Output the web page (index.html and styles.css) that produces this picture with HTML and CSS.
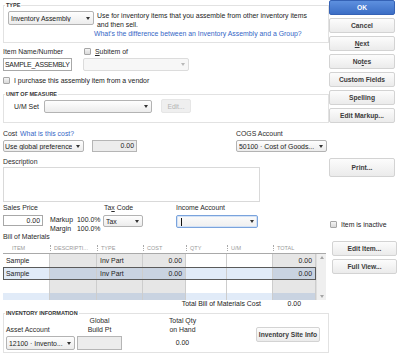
FILE: index.html
```html
<!DOCTYPE html>
<html lang="en">
<head>
    <meta charset="UTF-8">
    <meta name="viewport" content="width=device-width, initial-scale=1.0">
    <title>New Item - Inventory Assembly</title>
    <link rel="stylesheet" href="styles.css">
</head>
<body>
<div class="window">
    <div class="main">
        <fieldset class="group type-group">
            <legend>TYPE</legend>
            <div class="type-row">
                <div class="select type-select"><span>Inventory Assembly</span><i class="caret"></i></div>
                <div class="type-info">
                    <div>Use for inventory items that you assemble from other inventory items</div>
                    <div>and then sell.</div>
                    <a class="link diff-link" href="#">What's the difference between an Inventory Assembly and a Group?</a>
                </div>
            </div>
        </fieldset>

        <div class="name-row">
            <div class="name-field">
                <div class="label">Item Name/Number</div>
                <div class="input name-input">SAMPLE_ASSEMBLY</div>
            </div>
            <div class="subitem-field">
                <div class="label check"><span class="checkbox"></span><span><u>S</u>ubitem of</span></div>
                <div class="select disabled subitem-select"><span></span><i class="caret"></i></div>
            </div>
        </div>
        <div class="check vendor-check"><span class="checkbox"></span><span>I purchase this assembly item from a vendor</span></div>

        <fieldset class="group um-group">
            <legend>UNIT OF MEASURE</legend>
            <div class="um-row">
                <span class="um-label">U/M Set</span>
                <div class="select um-select"><span></span><i class="caret"></i></div>
                <button class="btn btn-off">Edit...</button>
            </div>
        </fieldset>

        <div class="cost-row">
            <div class="cost-field">
                <div class="label">Cost <a class="link" href="#">What is this cost?</a></div>
                <div class="cost-controls">
                    <div class="select cost-select"><span>Use global preference</span><i class="caret"></i></div>
                    <div class="input num gray cost-input">0.00</div>
                </div>
            </div>
            <div class="cogs-field">
                <div class="label">COGS Account</div>
                <div class="select cogs-select"><span>50100 · Cost of Goods...</span><i class="caret"></i></div>
            </div>
        </div>

        <div class="label desc-label">Description</div>
        <div class="textarea"></div>

        <div class="sales-row">
            <div class="sales-field">
                <div class="label">Sales Price</div>
                <div class="input num sales-input">0.00</div>
            </div>
            <div class="markup">
                <span>Markup</span><span>100.0%</span>
                <span>Margin</span><span>100.0%</span>
            </div>
            <div class="tax-field">
                <div class="label">Ta<u>x</u> Code</div>
                <div class="select tax-select"><span>Tax</span><i class="caret"></i></div>
            </div>
            <div class="income-field">
                <div class="label">Income Account</div>
                <div class="select focus income-select"><span class="cursor"></span><i class="caret"></i></div>
            </div>
        </div>

        <div class="label bom-label">Bill of Materials</div>
        <div class="bom">
            <div class="bom-head">
                <span>ITEM</span><span>DESCRIPTI...</span><span>TYPE</span><span>COST</span><span>QTY</span><span>U/M</span><span>TOTAL</span>
            </div>
            <div class="bom-body">
                <div class="bom-rows">
                    <div class="bom-row">
                        <div class="w">Sample</div><div class="g"></div><div class="g">Inv Part</div><div class="g num">0.00</div><div class="w"></div><div class="w"></div><div class="g num">0.00</div>
                    </div>
                    <div class="bom-row selected">
                        <div class="w">Sample</div><div class="g"></div><div class="g">Inv Part</div><div class="g num">0.00</div><div class="w"></div><div class="w"></div><div class="g num">0.00</div>
                    </div>
                    <div class="bom-row">
                        <div class="w"></div><div class="g"></div><div class="g"></div><div class="g"></div><div class="w"></div><div class="w"></div><div class="g"></div>
                    </div>
                    <div class="bom-row alt">
                        <div class="w"></div><div class="g"></div><div class="g"></div><div class="g"></div><div class="w"></div><div class="w"></div><div class="g"></div>
                    </div>
                </div>
                <div class="scrollbar"><i class="arrow up"></i><i class="arrow down"></i></div>
            </div>
        </div>
        <div class="bom-total"><span class="total-label">Total Bill of Materials Cost</span><span class="total-value">0.00</span></div>

        <fieldset class="group inv-group">
            <legend>INVENTORY INFORMATION</legend>
            <div class="inv-row">
                <div class="asset-field">
                    <div class="label">Asset Account</div>
                    <div class="select asset-select"><span>12100 · Invento...</span><i class="caret"></i></div>
                </div>
                <div class="build-field">
                    <div class="label">Global<br>Build Pt</div>
                    <div class="input gray build-input"></div>
                </div>
                <div class="qty-field">
                    <div class="label">Total Qty<br>on Hand</div>
                    <div class="qty-value">0.00</div>
                </div>
                <button class="btn site-btn">Inventory Site Info</button>
            </div>
        </fieldset>
    </div>

    <div class="side">
        <button class="btn primary">OK</button>
        <button class="btn">Cancel</button>
        <button class="btn"><u>N</u>ext</button>
        <button class="btn">No<u>t</u>es</button>
        <button class="btn">Custom Fields</button>
        <button class="btn">Spelling</button>
        <button class="btn">Edit Markup...</button>
        <button class="btn print-btn">Print...</button>
        <div class="check inactive-check"><span class="checkbox"></span><span>Item is inactive</span></div>
        <button class="btn edit-item-btn">Edit Item...</button>
        <button class="btn full-view-btn">Full View...</button>
    </div>
</div>
</body>
</html>
```

FILE: styles.css
```css
body {
    margin: 0;
    font-family: 'Liberation Sans', Arial, sans-serif;
    font-size: 6.9px;
    color: #222;
    background: #fff;
}

.window {
    display: flex;
    width: 400px;
    height: 358px;
    overflow: hidden;
}

.main {
    width: 326px;
    padding-left: 3px;
    flex: none;
}

.side {
    width: 66px;
    display: flex;
    flex-direction: column;
    flex: none;
}

/* group boxes */
.group {
    box-sizing: border-box;
    width: 100%;
    min-width: 0;
    margin: 0;
    border: 1px solid #e2e2e2;
    padding: 3px 4px 4px;
}

.group legend {
    font-size: 5.5px;
    font-weight: bold;
    line-height: 6px;
    padding: 0 1px;
    margin-left: -3px;
    color: #333;
}

.type-group {
    margin-top: 2px;
}

.type-row {
    display: flex;
    align-items: flex-start;
}

.type-select {
    width: 86px;
    height: 14px;
    padding-right: 5px;
}

.type-info {
    margin-left: 3px;
    line-height: 9px;
    white-space: nowrap;
}

.diff-link {
    display: block;
    margin-left: -3px;
}

.link {
    color: #3466c6;
    text-decoration: none;
}

.label {
    line-height: 9px;
    color: #2a2a2a;
    white-space: nowrap;
}

/* controls */
.select {
    box-sizing: border-box;
    flex: none;
    display: flex;
    align-items: center;
    justify-content: space-between;
    border: 1px solid #b3b3b3;
    border-radius: 2px;
    background: linear-gradient(#fefefe, #ececec);
    padding: 0 3px 0 2px;
    white-space: nowrap;
    overflow: hidden;
    color: #222;
}

.select span {
    min-width: 0;
    overflow: hidden;
}

.caret {
    flex: none;
    width: 0;
    height: 0;
    margin-left: 2px;
    border-left: 2.5px solid transparent;
    border-right: 2.5px solid transparent;
    border-top: 3px solid #333;
}

.select.disabled {
    border-color: #dcdcdc;
    background: #f7f7f7;
}

.select.disabled .caret {
    border-top-color: #b8b8b8;
}

.select.focus {
    border-color: #7aa3dc;
    box-shadow: inset 0 0 0 1px #d3e2f6;
    background: linear-gradient(#fbfbfb, #efefef);
}

.cursor {
    flex: none;
    width: 1px;
    height: 8px;
    margin-left: 2px;
    background: #111;
}

.input {
    box-sizing: border-box;
    flex: none;
    border: 1px solid #a8a8a8;
    background: #fff;
    padding: 0 2px;
    white-space: nowrap;
    overflow: hidden;
}

.input.num {
    text-align: right;
}

.input.gray {
    background: #ececec;
    border-color: #b5b5b5;
}

.checkbox {
    box-sizing: border-box;
    display: inline-block;
    flex: none;
    width: 7px;
    height: 7px;
    border: 1px solid #a6a6a6;
    border-radius: 1px;
    background: linear-gradient(#f4f4f4, #d9d9d9);
}

.check {
    display: flex;
    align-items: center;
    gap: 4px;
    white-space: nowrap;
}

.btn {
    box-sizing: border-box;
    flex: none;
    display: flex;
    align-items: center;
    justify-content: center;
    height: 15px;
    padding: 0;
    border: 1px solid #d3d3d3;
    border-radius: 2px;
    background: linear-gradient(#fcfcfc, #ebebeb);
    font-family: 'Liberation Sans', Arial, sans-serif;
    font-size: 6.7px;
    font-weight: bold;
    color: #3b3b3b;
    white-space: nowrap;
}

.btn.primary {
    background: linear-gradient(#5d90df, #3c6ec5);
    border-color: #3562b5;
    color: #fff;
}

.btn-off {
    width: 30px;
    height: 14px;
    margin-left: 9px;
    font-weight: normal;
    color: #b3b3b3;
    background: #efefef;
    border-color: #e6e6e6;
}

/* item name */
.name-row {
    display: flex;
    gap: 11px;
    margin-top: 4px;
}

.name-field {
    width: 69px;
}

.name-input {
    height: 13px;
    line-height: 11px;
    margin-top: 2px;
    letter-spacing: -0.25px;
    padding: 0 1px;
}

.subitem-field .check {
    padding-left: 1px;
}

.subitem-select {
    width: 106px;
    height: 13px;
    margin-top: 2px;
}

.vendor-check {
    margin-top: 5px;
    height: 8px;
}

/* unit of measure */
.um-group {
    margin-top: 7px;
    padding: 2px 4px 9px;
}

.um-row {
    display: flex;
    align-items: center;
    height: 14px;
}

.um-label {
    width: 30px;
    margin-left: 6px;
}

.um-select {
    width: 108px;
    height: 13px;
}

/* cost */
.cost-row {
    display: flex;
    margin-top: 7px;
}

.cost-row .label {
    line-height: 8px;
}

.cost-field {
    width: 233px;
}

.cost-field .link {
    margin-left: 1px;
}

.cost-controls {
    display: flex;
    gap: 8px;
    margin-top: 2px;
}

.cost-select {
    width: 81px;
    height: 12px;
    padding-left: 1px;
}

.cost-input {
    width: 45px;
    height: 12px;
    line-height: 10px;
}

.cogs-field {
    width: 91px;
}

.cogs-select {
    height: 12px;
    margin-top: 2px;
}

/* description */
.desc-label {
    margin-top: 6px;
    line-height: 8px;
}

.textarea {
    box-sizing: border-box;
    width: 257px;
    height: 35px;
    margin-top: 1px;
    border: 1px solid #d9d9d9;
}

/* sales */
.sales-row {
    display: flex;
    align-items: flex-start;
    margin-top: 2px;
}

.sales-row .label {
    line-height: 8px;
}

.sales-field {
    width: 40px;
}

.sales-input {
    height: 11px;
    line-height: 9px;
    margin-top: 3px;
}

.markup {
    display: grid;
    grid-template-columns: 27px auto;
    width: 53px;
    margin-left: 7px;
    margin-top: 11px;
    line-height: 9px;
    white-space: nowrap;
}

.tax-field {
    width: 40px;
}

.tax-field .label {
    padding-left: 1px;
}

.tax-select {
    height: 12px;
    margin-top: 3px;
}

.income-field {
    width: 82px;
    margin-left: 33px;
}

.income-select {
    height: 13px;
    margin-top: 3px;
}

/* bill of materials */
.bom-label {
    line-height: 7px;
}

.bom {
    width: 323px;
    margin-top: 2px;
}

.bom-head,
.bom-row {
    display: grid;
    grid-template-columns: 47px 47px 46px 43px 41px 46px 43px;
}

.bom-head {
    height: 11px;
    align-items: center;
}

.bom-head span {
    font-size: 5.5px;
    line-height: 6px;
    color: #9a9a9a;
    padding-left: 3px;
    border-left: 1px dotted #a9a9a9;
    white-space: nowrap;
    overflow: hidden;
}

.bom-head span:first-child {
    border-left: 0;
    padding-left: 9px;
}

.bom-body {
    display: flex;
    height: 46px;
    border-top: 1px solid #a9a9a9;
}

.bom-rows {
    width: 313px;
    overflow: hidden;
}

.bom-row {
    height: 13px;
}

.bom-row div {
    box-sizing: border-box;
    border-right: 1px solid #cdcdcd;
    padding: 0 3px;
    line-height: 13px;
    white-space: nowrap;
}

.bom-row .num {
    text-align: right;
}

.bom-row .w {
    background: #fff;
}

.bom-row .g {
    background: #e6e6e6;
}

.bom-row.selected {
    outline: 1px solid #5a5a5a;
    outline-offset: -1px;
}

.bom-row.selected .w,
.bom-row.alt .w {
    background: #e1ebf8;
}

.bom-row.selected .g,
.bom-row.alt .g {
    background: #c9d3e1;
}

.scrollbar {
    box-sizing: border-box;
    width: 10px;
    display: flex;
    flex-direction: column;
    justify-content: space-between;
    align-items: center;
    padding: 2px 0;
    background: #efefef;
    border-left: 1px solid #dedede;
}

.arrow {
    width: 0;
    height: 0;
    border-left: 2.5px solid transparent;
    border-right: 2.5px solid transparent;
}

.arrow.up {
    border-bottom: 3px solid #a5a5a5;
}

.arrow.down {
    border-top: 3px solid #a5a5a5;
}

.bom-total {
    display: flex;
    line-height: 7px;
    white-space: nowrap;
}

.total-label {
    width: 258px;
    text-align: right;
}

.total-value {
    width: 40px;
    text-align: right;
}

/* inventory information */
.inv-group {
    margin-top: 3px;
    padding: 0 8px 2px 2px;
}

.inv-group legend {
    margin-left: -1px;
}

.inv-row {
    display: flex;
    align-items: flex-end;
}

.asset-field {
    width: 69px;
}

.asset-select {
    height: 14px;
    margin-top: 2px;
}

.build-field {
    width: 45px;
    margin-left: 2px;
    text-align: center;
}

.build-input {
    height: 14px;
    margin-top: 2px;
}

.qty-field {
    width: 45px;
    margin-left: 38px;
    text-align: center;
}

.qty-value {
    line-height: 14px;
    margin-top: 2px;
}

.site-btn {
    width: 64px;
    height: 15px;
    margin-left: auto;
    margin-bottom: 8px;
}

/* right column */
.side .btn {
    width: 66px;
    margin-top: 3px;
}

.side .btn.primary {
    margin-top: 0;
}

.side .print-btn {
    height: 19px;
    margin-top: 35px;
}

.inactive-check {
    height: 9px;
    margin-top: 43px;
    padding-left: 1px;
}

.side .edit-item-btn {
    width: 65px;
    margin-top: 12px;
    margin-left: 3px;
}

.side .full-view-btn {
    width: 65px;
    margin-left: 3px;
}
```
